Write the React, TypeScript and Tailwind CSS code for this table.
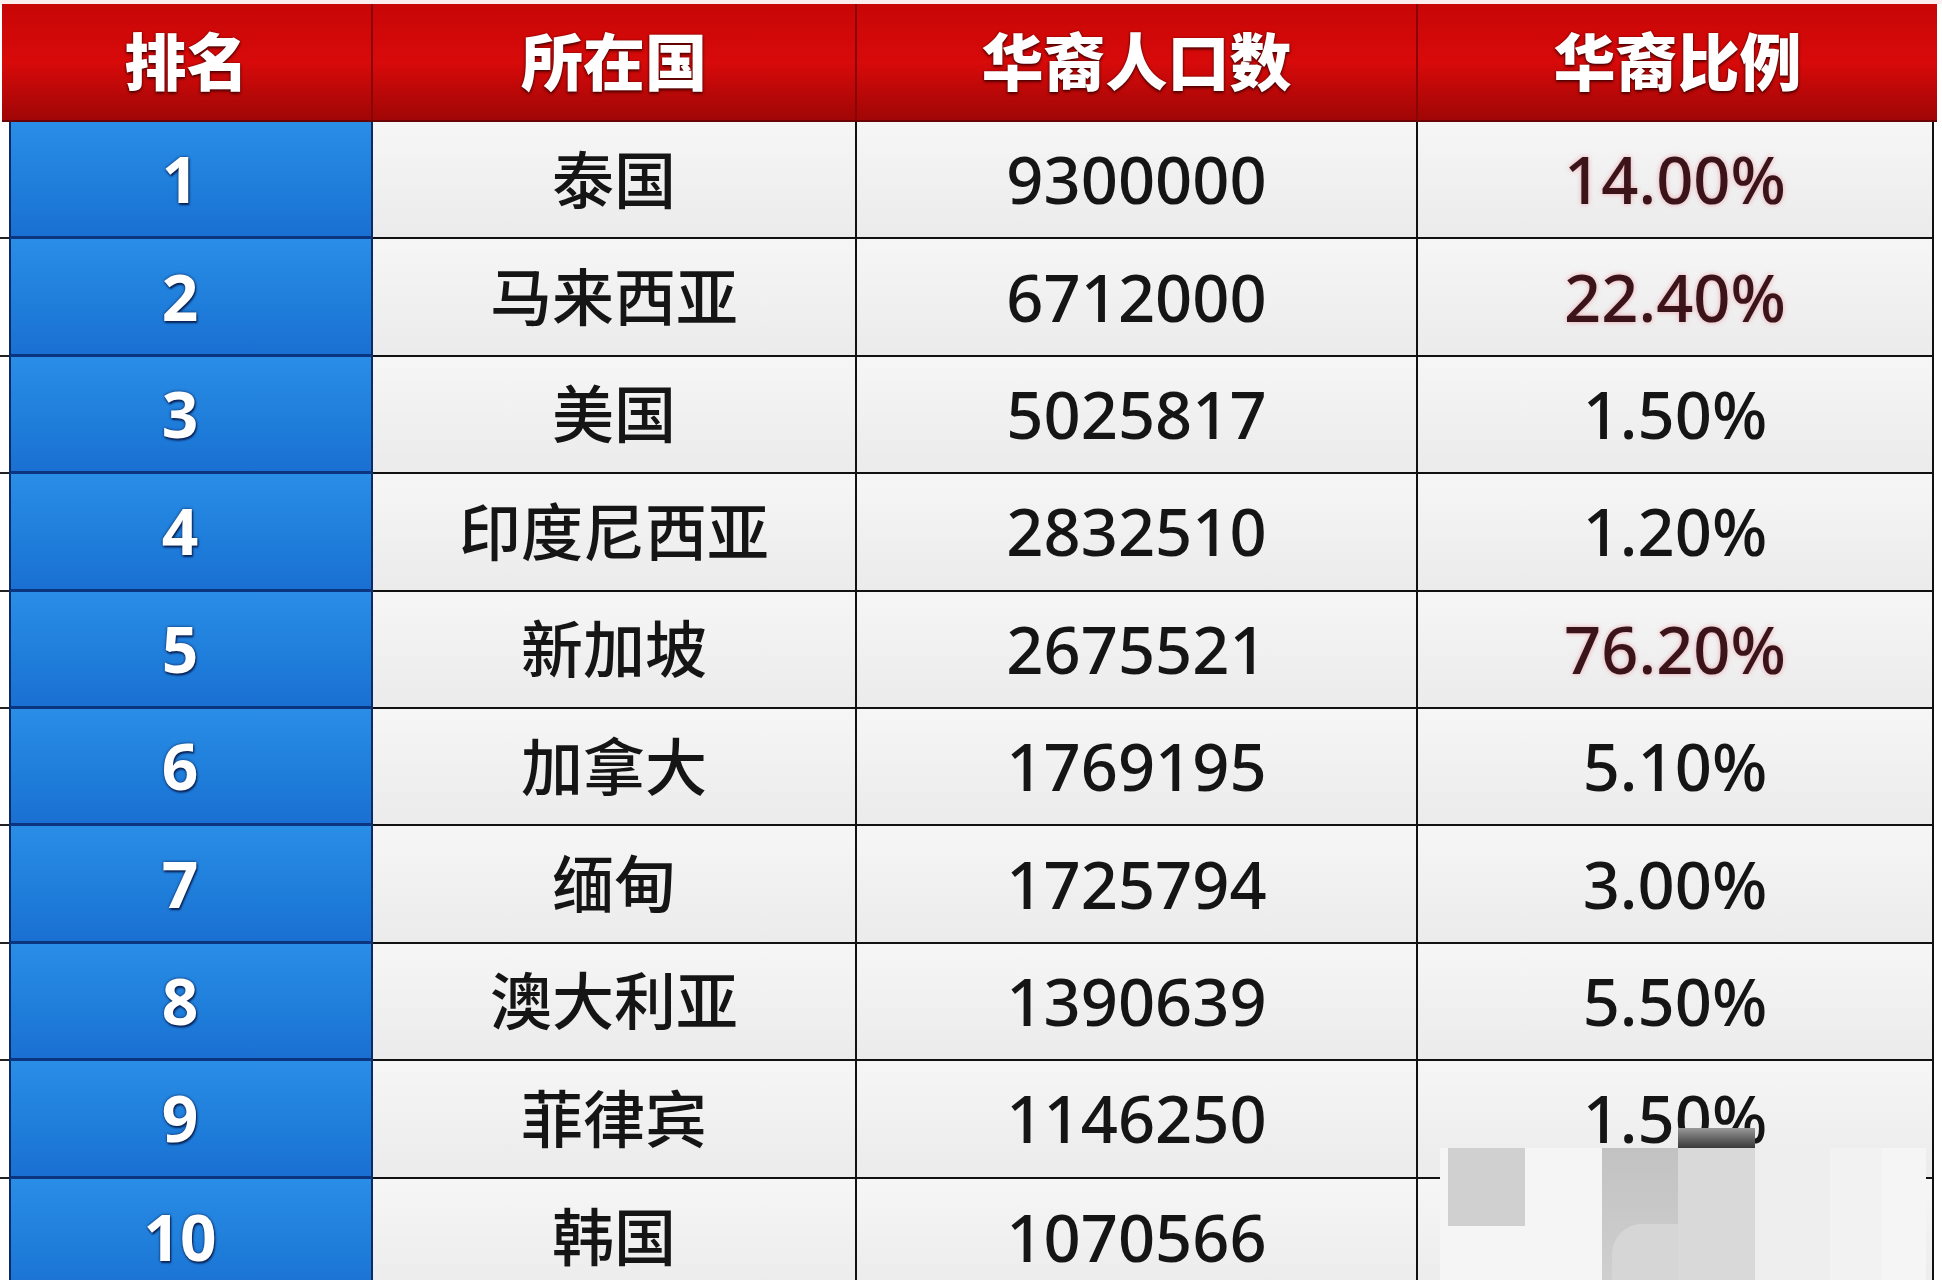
import React from "react";

type Row = [string, string, string, string, boolean];

const rows: Row[] = [
  ["1", "泰国", "9300000", "14.00%", true],
  ["2", "马来西亚", "6712000", "22.40%", true],
  ["3", "美国", "5025817", "1.50%", false],
  ["4", "印度尼西亚", "2832510", "1.20%", false],
  ["5", "新加坡", "2675521", "76.20%", true],
  ["6", "加拿大", "1769195", "5.10%", false],
  ["7", "缅甸", "1725794", "3.00%", false],
  ["8", "澳大利亚", "1390639", "5.50%", false],
  ["9", "菲律宾", "1146250", "1.50%", false],
  ["10", "韩国", "1070566", "", false],
];

const headCell =
  "flex items-center justify-center h-full text-white text-[62px] font-black leading-none [text-shadow:0_2px_3px_rgba(60,0,0,0.85),0_0_2px_rgba(60,0,0,0.7)]";

export default function App() {
  return (
    <div className="relative w-[1942px] h-[1280px] overflow-hidden bg-white [font-family:'Noto_Sans','Noto_Sans_CJK_SC',sans-serif]">
      <div className="h-[4px] bg-[#fbeeee]" />
      {/* header */}
      <div className="ml-[2px] flex h-[118px] w-[1935px] bg-linear-to-b from-[#c80606] via-[#d80a0a] to-[#a00606] border-b-2 border-[#6a0404]">
        <div className={`${headCell} w-[371px] border-r-2 border-[#8a0505]`}>排名</div>
        <div className={`${headCell} w-[484px] border-r-2 border-[#8a0505]`}>所在国</div>
        <div className={`${headCell} w-[561px] border-r-2 border-[#8a0505]`}>华裔人口数</div>
        <div className={`${headCell} w-[519px]`}>华裔比例</div>
      </div>
      {/* body */}
      <div className="flex flex-col">
        {rows.map(([rank, country, pop, pct, red], i) => (
          <div key={rank} className="flex h-[117.4px]">
            <div className={`w-[9px] bg-white ${i < 9 ? "border-b-2 border-[#222]" : ""}`} />
            <div
              className={`w-[364px] flex items-center justify-center pr-[22px] border-l-2 border-r-2 border-l-[#0b2a66] border-r-[#0b2a66] bg-linear-to-b from-[#2a8de6] via-[#2080dc] to-[#1a70d2] text-white text-[64px] font-bold leading-none [text-shadow:0_0_3px_#0a2458,1px_2px_2px_#0a2458] ${
                i < 9 ? "border-b-[3px] border-b-[#0c3580]" : ""
              }`}
            >
              {rank}
            </div>
            <div
              className={`w-[484px] flex items-center justify-center border-r-2 border-[#111] bg-linear-to-b from-[#f6f6f6] to-[#ebebeb] text-[#151515] text-[62px] font-medium leading-none ${
                i < 9 ? "border-b-2 border-b-[#111]" : ""
              }`}
            >
              {country}
            </div>
            <div
              className={`w-[561px] flex items-center justify-center border-r-2 border-[#111] bg-linear-to-b from-[#f6f6f6] to-[#ebebeb] text-[#151515] text-[65px] font-medium leading-none ${
                i < 9 ? "border-b-2 border-b-[#111]" : ""
              }`}
            >
              {pop}
            </div>
            <div
              className={`w-[516px] flex items-center justify-center border-r-2 border-[#111] bg-linear-to-b from-[#f6f6f6] to-[#ebebeb] text-[65px] font-medium leading-none ${
                red
                  ? "text-[#3a1418] [text-shadow:0_0_5px_rgba(235,110,130,0.55)]"
                  : "text-[#151515]"
              } ${i < 9 ? "border-b-2 border-b-[#111]" : ""}`}
            >
              {pct}
            </div>
          </div>
        ))}
      </div>
      {/* watermark overlay */}
      <div className="absolute left-[1440px] top-[1148px] w-[486px] h-[132px] bg-[#f5f5f5]">
        <div className="absolute left-[8px] top-0 w-[77px] h-[78px] bg-[#d0d0d0]" />
        <div className="absolute left-[162px] top-0 w-[76px] h-[132px] bg-linear-to-b from-[#c2c2c2] to-[#cfcfcf]" />
        <div className="absolute left-[172px] top-[76px] w-[66px] h-[56px] rounded-tl-[30px] bg-[#d6d6d6]" />
        <div className="absolute left-[238px] top-0 w-[77px] h-[132px] bg-[#d9d9d9]" />
        <div className="absolute left-[315px] top-0 w-[75px] h-[132px] bg-[#eeeeee]" />
        <div className="absolute left-[390px] top-0 w-[52px] h-[132px] bg-[#f2f2f2]" />
      </div>
      <div className="absolute left-[1678px] top-[1128px] w-[77px] h-[20px] bg-linear-to-b from-[#9a9a9a] to-[#3a3a3a]" />
    </div>
  );
}
